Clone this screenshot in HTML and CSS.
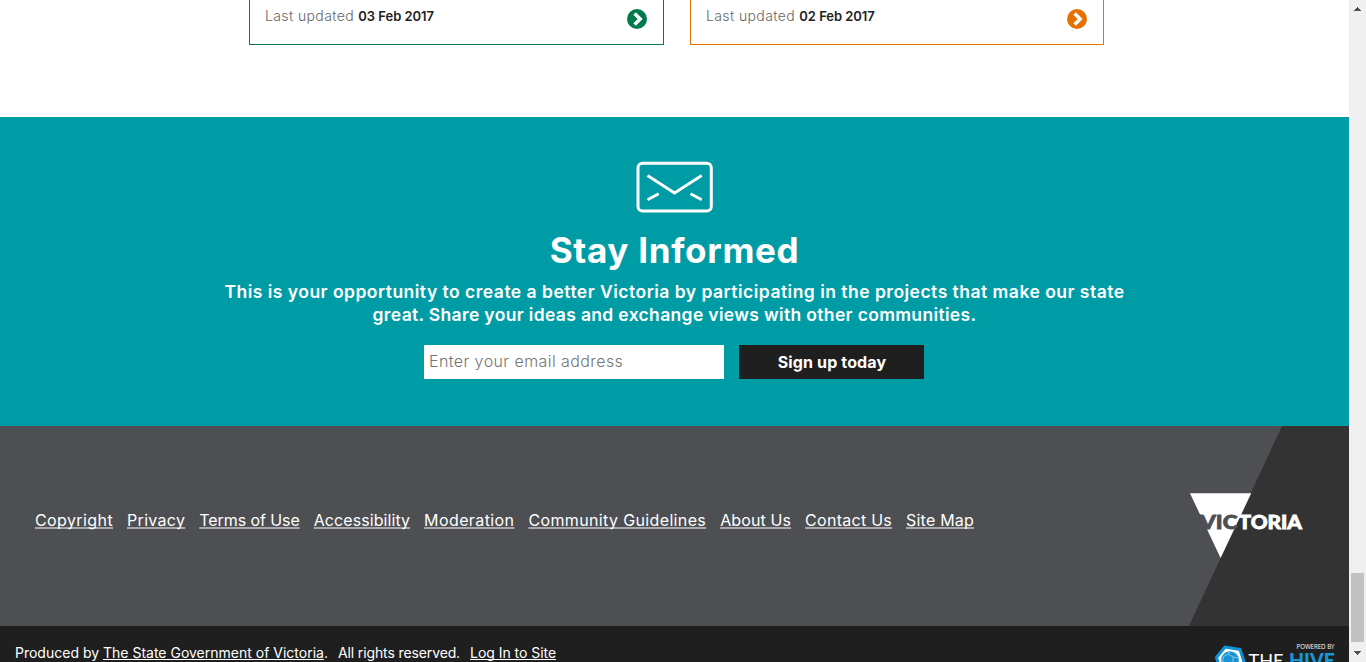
FILE: index.html
```html
<!DOCTYPE html>
<html lang="en">
<head>
<meta charset="utf-8">
<title>Engage Victoria</title>
<link rel="stylesheet" href="styles.css">
</head>
<body>
<div class="window">
  <div class="page">
    <section class="cards">
      <article class="card card-green">
        <p class="updated">Last updated <strong>03 Feb 2017</strong></p>
        <svg class="go" width="20" height="20" viewBox="0 0 20 20"><circle cx="10" cy="10" r="10" fill="currentColor"/><path d="M7.600 4.400 13.200 10l-5.600 5.600" fill="none" stroke="#fff" stroke-width="3.500"/></svg>
      </article>
      <article class="card card-orange">
        <p class="updated">Last updated <strong>02 Feb 2017</strong></p>
        <svg class="go" width="20" height="20" viewBox="0 0 20 20"><circle cx="10" cy="10" r="10" fill="currentColor"/><path d="M7.600 4.400 13.200 10l-5.600 5.600" fill="none" stroke="#fff" stroke-width="3.500"/></svg>
      </article>
    </section>

    <section class="signup">
      <svg class="mail" width="77" height="52" viewBox="0 0 77 52" fill="none" stroke="#fff">
        <rect x="2" y="2.200" width="73.300" height="47.800" rx="4.500" stroke-width="3"/>
        <path d="M11.5 14.5 38.5 32 65.7 14.5M11.5 38.7l11.2-6M65.7 38.7l-11.2-6" stroke-width="2.8"/>
      </svg>
      <h2 class="title">Stay Informed</h2>
      <p class="lead"><span class="lead-first">This is your opportunity to create a better Victoria by participating in the projects that make our state</span><br><span class="lead-second">great. Share your ideas and exchange views with other communities.</span></p>
      <form class="form">
        <input class="email" type="email" placeholder="Enter your email address">
        <button class="submit" type="button">Sign up today</button>
      </form>
    </section>

    <footer class="footer">
      <nav class="links">
        <a class="ls-wide" href="#">Copyright</a>
        <a class="ls-mid" href="#">Privacy</a>
        <a class="ls-tight" href="#">Terms of Use</a>
        <a class="ls-slight" href="#">Accessibility</a>
        <a class="ls-wide" href="#">Moderation</a>
        <a class="ls-wider" href="#">Community Guidelines</a>
        <a class="ls-small" href="#">About Us</a>
        <a class="ls-contact" href="#">Contact Us</a>
        <a class="ls-map" href="#">Site Map</a>
      </nav>
      <svg class="brand" width="160" height="200" viewBox="1189 426 160 200">
        <path d="M1282 426h67v200h-160z" fill="#333"/>
        <path d="M1190 493.3h61.2L1220.6 558z" fill="#fff"/>
        <text class="brand-text" x="1200" y="529" textLength="37.5" lengthAdjust="spacingAndGlyphs" fill="#4e4f53" stroke="#4e4f53">VIC</text>
        <text class="brand-text" x="1238.5" y="529" textLength="63.5" lengthAdjust="spacingAndGlyphs" fill="#fff" stroke="#fff">TORIA</text>
      </svg>
    </footer>

    <div class="legal">
      <p class="legal-text"><span class="producer">Produced by <a href="#">The State Government of Victoria</a>.</span><span class="rights">All rights reserved.</span><a class="login" href="#">Log In to Site</a></p>
      <svg class="hive" width="122" height="32" viewBox="1214 642 122 32">
        <path d="M1225 647 1240 649.5 1244 662 1234 673 1221 671 1216.500 657.500z" fill="#fff" stroke="#0d94d8" stroke-width="3" stroke-linejoin="round"/>
        <circle cx="1230" cy="660" r="8.800" fill="#1b93d3"/>
        <path d="M1223 657l5-3 5 3v5l-5 3-5-3zM1233 657l5 1M1228 654l2-2" fill="none" stroke="#7cc8ec" stroke-width="1"/>
        <text class="powered" x="1296.500" y="649" textLength="38" lengthAdjust="spacingAndGlyphs">POWERED BY</text>
        <text class="the" x="1248.500" y="667.500" textLength="35" lengthAdjust="spacingAndGlyphs">THE</text>
        <text class="hive-word" x="1289" y="667.500" textLength="46" lengthAdjust="spacingAndGlyphs">HIVE</text>
      </svg>
    </div>
  </div>

  <div class="scrollbar">
    <svg width="7" height="4" viewBox="0 0 7 4"><path d="M3 0h1v1h1v1h1v1h1v1H0V3h1V2h1V1h1z" fill="#505050"/></svg>
    <div class="thumb"></div>
    <svg width="7" height="4" viewBox="0 0 7 4"><path d="M0 0h7v1H6v1H5v1H4v1H3V3H2V2H1V1H0z" fill="#505050"/></svg>
  </div>
</div>
</body>
</html>
```
FILE: styles.css
```css
* { box-sizing: border-box; }
body { margin: 0; overflow: hidden; background: #fff; font-family: Inter, "Liberation Sans", sans-serif; }
p, h2 { margin: 0; }
.window { display: flex; width: 1366px; height: 662px; overflow: hidden; }
.page { width: 1349px; height: 662px; overflow: hidden; }

.cards { display: flex; gap: 26px; height: 117px; padding-left: 249px; }
.card { display: flex; justify-content: space-between; width: 415px; height: 45px; padding: 6px 16px 0 15px; border: 1px solid; border-top: 0; }
.card-green { color: #007b4b; }
.card-orange { width: 414px; color: #e57200; }
.updated { font-size: 14px; font-weight: 300; line-height: 20px; letter-spacing: .39px; color: #666; white-space: nowrap; }
.updated strong { font-size: 13px; font-weight: 600; letter-spacing: -.05px; color: #222; }
.go { margin-top: 3px; }

.signup { display: flex; flex-direction: column; align-items: center; height: 309px; padding-top: 44px; background: #009ca6; color: #fff; text-align: center; }
.title { margin-top: 17px; font-size: 35px; font-weight: 700; line-height: 40px; letter-spacing: .7px; }
.lead { margin-top: 10px; font-size: 17.5px; font-weight: 600; line-height: 23px; white-space: nowrap; }
.lead-first { letter-spacing: .485px; }
.lead-second { letter-spacing: .34px; }
.form { display: flex; gap: 15px; margin: 19px 1px 0 0; }
.email { width: 300px; height: 34px; padding: 0 5px 2px; border: 0; border-radius: 0; background: #fff; font: 400 16px Inter, sans-serif; letter-spacing: .42px; }
.email::placeholder { color: #757575; font-weight: 300; }
.submit { width: 185px; height: 34px; padding: 0 0 0 1px; border: 0; background: #201f20; color: #fff; font: 700 16px Inter, sans-serif; letter-spacing: .13px; }

.footer { display: flex; align-items: center; justify-content: space-between; height: 200px; padding-left: 35px; background: #4e4f53; color: #fff; }
.links { display: flex; gap: 14px; margin-bottom: 13px; font-size: 16px; line-height: 22px; white-space: nowrap; }
.links a { color: #fff; text-decoration: underline; text-decoration-color: #a8a8aa; text-decoration-thickness: 2px; text-underline-offset: 1px; text-decoration-skip-ink: none; }
.ls-wide { letter-spacing: .4px; }
.ls-wider { letter-spacing: .36px; }
.ls-mid { letter-spacing: .31px; }
.ls-tight { letter-spacing: -.08px; }
.ls-slight { letter-spacing: .08px; }
.ls-small { letter-spacing: .12px; }
.ls-contact { letter-spacing: .27px; }
.ls-map { letter-spacing: .21px; }
.brand-text { font: 900 19.5px Lato, sans-serif; stroke-width: .8px; }

.legal { display: flex; justify-content: space-between; height: 36px; padding: 16px 13px 0 15px; background: #201f20; color: #fff; }
.legal-text { padding-top: 1px; font-size: 14px; line-height: 20px; white-space: nowrap; }
.legal-text a { color: #fff; text-decoration-thickness: 1px; text-underline-offset: 1px; text-decoration-skip-ink: none; }
.rights { margin: 0 10px; letter-spacing: -.12px; }
.login { letter-spacing: -.04px; }
.hive { flex: none; }
.powered { font: 400 7px "Open Sans", sans-serif; fill: #fff; }
.the { font: 400 20px Lato, sans-serif; fill: #fff; }
.hive-word { font: 900 20px Lato, sans-serif; fill: #1597d8; }

.scrollbar { display: flex; flex-direction: column; align-items: center; width: 17px; height: 662px; padding: 7px 0; background: #f0f0f0; }
.thumb { width: 13px; height: 69px; margin: 562px 0 9px; background: #c1c1c1; }
.scrollbar svg { flex: none; }
```
